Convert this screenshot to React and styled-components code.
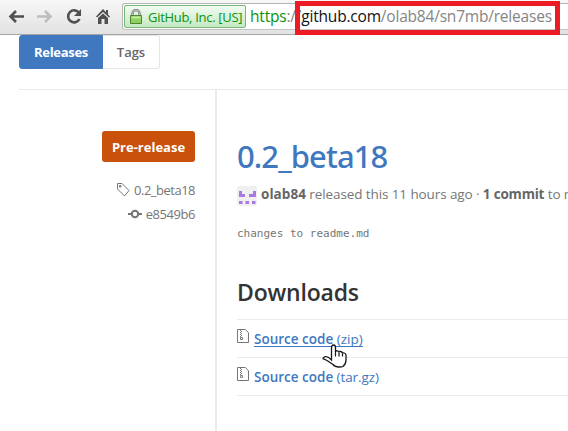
import React from "react";
import styled, { createGlobalStyle } from "styled-components";

const Global = createGlobalStyle`
  * { box-sizing: border-box; }
  body { margin: 0; background: #fff; overflow: hidden; }
  h1, h2, p { margin: 0; }
  svg { flex: none; }
`;

const Page = styled.div`
  position: relative;
  width: 568px;
  height: 431px;
  overflow: hidden;
  background: #fff;
  color: #767676;
  font-family: "Open Sans", "Noto Sans", sans-serif;
  font-size: 13px;
  white-space: nowrap;
`;

const Text = styled.span`
  letter-spacing: ${(p) => p.$track || 0}px;
  font-weight: ${(p) => p.$weight || "inherit"};
  color: ${(p) => p.$color || "inherit"};
`;

const Toolbar = styled.header`
  display: flex;
  height: 35px;
  padding: 3px 0 0 8px;
  background: linear-gradient(#f7f7f7, #e2e2e2);
  border-bottom: 1px solid #a5a5a5;
`;

const NavIcons = styled.nav`
  display: flex;
  gap: 13px;
  width: 114px;
  flex: none;
  padding-top: 5px;
`;

const NavIcon = styled.svg`
  width: 16px;
  height: 17px;
  fill: none;
  stroke: ${(p) => (p.$disabled ? "#bdbdbd" : "#505050")};
  stroke-width: 2.6;
`;

const AddressBar = styled.div`
  display: flex;
  flex: none;
  width: 460px;
  height: 27px;
  padding: 1px;
  background: #fff;
  border: 1px solid #b5b5b5;
  border-bottom-color: #c4c4c4;
  border-radius: 3px;
`;

const Identity = styled.div`
  display: flex;
  flex: none;
  width: 122px;
  height: 23px;
  padding: 3px 0 0 5px;
  gap: 6px;
  border: 1px solid #75b875;
  border-radius: 2px;
  background: linear-gradient(#f2fbf2, #c5e9c5);
  color: #0c930c;
  font-size: 13px;
  line-height: 16px;
`;

const Url = styled.div`
  margin-left: 4px;
  font-size: 15.5px;
  line-height: 22px;
  color: #858585;
`;

const Highlight = styled.div`
  position: absolute;
  left: 295px;
  top: 1px;
  width: 265px;
  height: 34px;
  border: 5px solid #ed1c24;
`;

const Tabs = styled.div`
  display: flex;
  width: 141px;
  height: 34px;
  margin-left: 19px;
`;

const Tab = styled.div`
  width: ${(p) => (p.$active ? 84 : 57)}px;
  border: 1px solid ${(p) => (p.$active ? "#4078c0" : "#e5e5e5")};
  border-left-width: ${(p) => (p.$active ? 1 : 0)}px;
  border-radius: ${(p) => (p.$active ? "3px 0 0 3px" : "0 3px 3px 0")};
  background: ${(p) => (p.$active ? "#4078c0" : "#fff")};
  color: ${(p) => (p.$active ? "#fff" : "#666")};
  font-weight: ${(p) => (p.$active ? 700 : 600)};
  text-align: center;
  line-height: 33px;
`;

const Release = styled.main`
  display: flex;
  height: 342px;
  margin: 20px 0 0 19px;
  border-top: 1px solid #eaeaea;
`;

const Meta = styled.aside`
  display: flex;
  flex: none;
  flex-direction: column;
  align-items: flex-end;
  width: 198px;
  padding: 41px 20px 0 0;
  border-right: 2px solid #eaeaea;
`;

const Badge = styled.div`
  width: 93px;
  height: 31px;
  margin-bottom: 16px;
  border-radius: 3px;
  background: #c9510c;
  color: #fff;
  font-weight: 700;
  line-height: 32px;
  text-align: center;
`;

const MetaRow = styled.div`
  display: flex;
  height: 24px;
  line-height: 24px;
  gap: 4px;
`;

const MetaIcon = styled.svg`
  width: 14px;
  height: 24px;
  fill: none;
  stroke: #767676;
`;

const Content = styled.section`
  width: 351px;
  flex: none;
  padding: 44px 0 0 20px;
`;

const Title = styled.h1`
  height: 48px;
  font-family: "Noto Sans", sans-serif;
  font-size: 31px;
  font-weight: 500;
  line-height: 44px;
  color: #4078c0;
`;

const Byline = styled.div`
  display: flex;
  gap: 4px;
  height: 24px;
  font-size: 13.5px;
  line-height: 24px;
`;

const Avatar = styled.svg`
  width: 20px;
  height: 20px;
  margin-top: 4px;
`;

const Notes = styled.p`
  height: 20px;
  margin-top: 18px;
  font: 11px/20px "DejaVu Sans Mono", monospace;
`;

const Heading = styled.h2`
  height: 75px;
  padding-top: 31px;
  font-family: "Open Sans", sans-serif;
  font-size: 23px;
  font-weight: 600;
  line-height: 34px;
  color: #333;
`;

const Download = styled.div`
  display: flex;
  gap: 5px;
  height: 38px;
  border-top: 1px solid #eaeaea;
  font-size: 13.5px;
  line-height: 38px;
  color: #4078c0;
`;

const DownloadLink = styled.span`
  height: 27px;
  border-bottom: ${(p) => (p.$hover ? "1px solid #4078c0" : "0")};
`;

const ZipIcon = styled.svg`
  width: 12px;
  height: 14px;
  margin-top: 9px;
  fill: none;
  stroke: #767676;
`;

const Pointer = styled.svg`
  position: absolute;
  left: 322px;
  top: 343px;
  width: 26px;
  height: 26px;
`;

const List = styled.div`
  border-bottom: 1px solid #eaeaea;
`;

function FileZip() {
  return (
    <ZipIcon viewBox="0 0 12 14">
      <path d="M.5.5h7.8l3.200 3.200v9.800H.5z" />
      <path d="M3 1.500h1M4 2.500h1M3 3.500h1M4 4.500h1M3 5.500h1M4 6.500h1M3 7.500h1" />
      <path d="M3.500 8.500h2v2h-2z" strokeWidth=".9" />
    </ZipIcon>
  );
}

export default function App() {
  return (
    <Page>
      <Global />
      <Toolbar>
        <NavIcons>
          <NavIcon viewBox="0 0 16 17"><path d="M16 8.500H3M8 3 2.500 8.500 8 14" /></NavIcon>
          <NavIcon viewBox="0 0 16 17" $disabled><path d="M0 8.500h13M8 3l5.500 5.500L8 14" /></NavIcon>
          <NavIcon viewBox="0 0 16 17"><path d="M13 4.800A6 6 0 1 0 13.500 11" /><path d="M15 1v7H8z" fill="#505050" stroke="none" /></NavIcon>
          <NavIcon viewBox="0 0 16 17"><path d="M8 1 1 8.500l1 1L8 4l6 5.500 1-1-2-2V2h-2v2.200zM3 10l5-4.500 5 4.500v6H9.500v-5h-3v5H3z" fill="#505050" stroke="none" /></NavIcon>
        </NavIcons>
        <AddressBar>
          <Identity>
            <svg width="12" height="16" viewBox="0 0 12 16">
              <path d="M2.500 7V4.500a3.500 3.500 0 0 1 7 0V7" fill="none" stroke="#777" strokeWidth="2.400" />
              <path d="M2.500 7V4.500a3.500 3.500 0 0 1 7 0V7" fill="none" stroke="#ddd" strokeWidth=".8" />
              <path d="M.5 6.500h11v8H.5z" fill="#8bd15b" stroke="#51852f" />
              <path d="M1.500 7.500h9v2h-9z" fill="#c0eb9e" />
            </svg>
            <Text $track={-0.3}>GitHub, Inc. [US]</Text>
          </Identity>
          <Url>
            <Text $color="#0c930c" $track={-0.2}>https</Text>
            <Text $track={-0.2}>://</Text>
            <Text $color="#111" $track={-0.2}>github.com</Text>
            <Text $track={-0.2}>/olab84/sn7mb/releases</Text>
          </Url>
        </AddressBar>
      </Toolbar>
      <Highlight />
      <Tabs>
        <Tab $active><Text $track={-0.3}>Releases</Text></Tab>
        <Tab><Text>Tags</Text></Tab>
      </Tabs>
      <Release>
        <Meta>
          <Badge><Text>Pre-release</Text></Badge>
          <MetaRow>
            <MetaIcon viewBox="0 0 14 24"><path d="M1.500 5.500H6l7 7L8.500 18 1.500 11z" /><path d="M3.500 7.500H5V9H3.500z" /></MetaIcon>
            <Text $track={-0.5}>0.2_beta18</Text>
          </MetaRow>
          <MetaRow>
            <MetaIcon viewBox="0 0 14 24" strokeWidth="2"><path d="M0 12h3.500M10.500 12H14" /><circle cx="7" cy="12" r="3.200" /></MetaIcon>
            <Text $track={-0.45}>e8549b6</Text>
          </MetaRow>
        </Meta>
        <Content>
          <Title><Text $track={-0.9}>0.2_beta18</Text></Title>
          <Byline>
            <Avatar viewBox="0 0 20 20">
              <rect width="20" height="20" rx="2" fill="#f0f0f0" />
              <path d="M2 5h3v3h3v3H2zM16 5h3v6h-7V8h4zM2 15h3.500v3H2zM8.500 15H12v3H8.500zM15 15h3.500v3H15z" fill="#a67be0" />
            </Avatar>
            <span>
              <Text $weight={700} $color="#666" $track={0.05}>olab84</Text>
              <Text $track={-0.1}> released this 11 hours ago · </Text>
              <Text $weight={700} $color="#666" $track={-0.2}>1 commit</Text>
              <Text $track={-0.1}> to m</Text>
            </span>
          </Byline>
          <Notes><Text>changes to readme.md</Text></Notes>
          <Heading><Text $track={-0.2}>Downloads</Text></Heading>
          <List>
            <Download>
              <FileZip />
              <DownloadLink $hover><Text $weight={600}>Source code</Text><Text> (zip)</Text></DownloadLink>
            </Download>
            <Download>
              <FileZip />
              <DownloadLink><Text $weight={600}>Source code</Text><Text $track={-0.1}> (tar.gz)</Text></DownloadLink>
            </Download>
          </List>
        </Content>
      </Release>
      <Pointer viewBox="0 0 26 26">
        <path d="M9.500 16V4.500Q9.500 2 11.500 2t2 2.500V9q0-1.500 1.800-1.200T17 9.500q0-1.200 1.700-1T20.500 10.500q0-1 1.700-.5t1.800 2V17q0 4-3 6.500-1 .5-4 .5-4 0-6-2.500L5 17.500l-4-1.800q.5-2.200 3-2t5.500 3.300z" fill="#fff" stroke="#15151c" strokeWidth="1.300" />
        <path d="M13.500 8v5.500M17 9.500v4M20.500 10.500v3" fill="none" stroke="#15151c" strokeWidth="1.200" />
      </Pointer>
    </Page>
  );
}
